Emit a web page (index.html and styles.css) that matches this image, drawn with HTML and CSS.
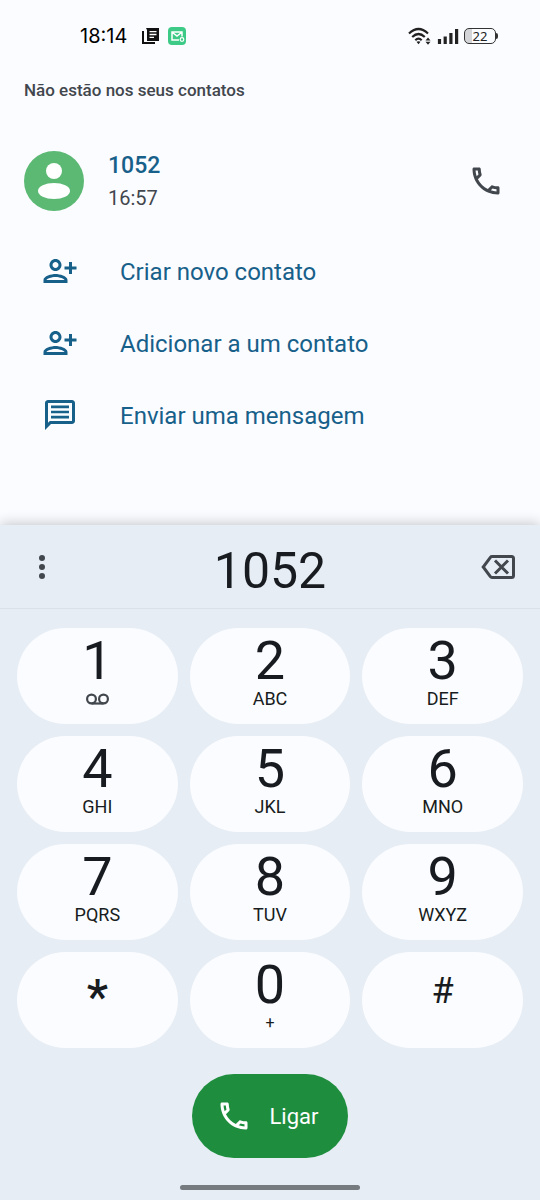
FILE: index.html
```
<!DOCTYPE html>
<html lang="pt-BR">
<head>
<meta charset="utf-8">
<meta name="viewport" content="width=device-width, initial-scale=1">
<title>Telefone</title>
<link rel="stylesheet" href="styles.css">
</head>
<body>
<svg class="defs" aria-hidden="true">
  <symbol id="call" viewBox="0 0 24 24"><path d="M6.54 5c.06.89.21 1.76.45 2.59l-1.2 1.2c-.41-1.2-.67-2.47-.76-3.79h1.51m9.86 12.02c.85.24 1.72.39 2.6.45v1.49c-1.32-.09-2.59-.35-3.8-.75l1.2-1.19M7.5 3H4c-.55 0-1 .45-1 1 0 9.39 7.61 17 17 17 .55 0 1-.45 1-1v-3.49c0-.55-.45-1-1-1-1.24 0-2.45-.2-3.57-.57-.1-.04-.21-.05-.31-.05-.26 0-.51.1-.71.29l-2.2 2.2c-2.83-1.45-5.15-3.76-6.59-6.59l2.2-2.2c.28-.28.36-.67.25-1.02C8.7 6.45 8.5 5.25 8.5 4c0-.55-.45-1-1-1z"/></symbol>
  <symbol id="person-add" viewBox="0 0 24 24"><path d="M13 8c0-2.21-1.79-4-4-4S5 5.79 5 8s1.79 4 4 4 4-1.79 4-4zm-2 0c0 1.1-.9 2-2 2s-2-.9-2-2 .9-2 2-2 2 .9 2 2zM1 18v2h16v-2c0-2.66-5.33-4-8-4s-8 1.34-8 4zm2 0c.2-.71 3.3-2 6-2 2.69 0 5.78 1.28 6 2H3zM20 14v-3h3V9h-3V6h-2v3h-3v2h3v3z"/></symbol>
  <symbol id="chat" viewBox="0 0 24 24"><path d="M4 2c-1.100 0-2 .9-2 2v18l4-4h14c1.100 0 2-.9 2-2V4c0-1.100-.9-2-2-2H4zm0 2h16v12H5.200L4 17.200V4zm2 1.700h12v1.800H6zm0 3.400h12v1.800H6zm0 3.400h12v1.800H6z"/></symbol>
</svg>

<header class="status">
  <div class="status-group">
    <time class="clock">18:14</time>
    <svg class="status-icon" viewBox="0 0 18 18" aria-hidden="true"><path d="M1 4v12h12" fill="none" stroke="#111" stroke-width="2"/><path d="M4 1h13v13H5V3z" fill="#111"/><path d="M7.500 4.700h7M7.500 7.500h7M7.500 10.300h4.500" stroke="#fff" stroke-width="1.300"/></svg>
    <svg class="status-icon" viewBox="0 0 18 18" aria-hidden="true"><rect width="18" height="18" rx="4" fill="#3dca86"/><path d="M11 13H4V5h10v4.500M4.500 5.500 9 9l4.500-3.500" fill="none" stroke="#fff" stroke-width="1.500"/><circle cx="14" cy="12.500" r="1.800" fill="#3dca86" stroke="#fff" stroke-width="1.200"/></svg>
  </div>
  <div class="status-group signals">
    <svg class="wifi" viewBox="0 0 24 18" aria-hidden="true"><g fill="none" stroke="#222" stroke-width="2.200"><path d="M1 6.500q9.500-9 19 0M4.200 10q6.300-6 12.600 0M7.300 13.200q3.200-3 6.400 0"/></g><path d="m10.500 17.200-2-2.400q2-1.300 4 0zM17.500 13.500l2.500-3 2.500 3zM17.500 14.800l2.500 3 2.500-3z" fill="#222"/></svg>
    <svg class="bars" viewBox="0 0 22 16" aria-hidden="true"><path d="M2.500 16v-5M8.200 16V8.500M13.900 16V5M19.600 16V1" stroke="#222" stroke-width="3.200"/></svg>
    <span class="battery" role="img" aria-label="Bateria 22%">22</span>
  </div>
</header>

<main class="results">
  <h1 class="heading">Não estão nos seus contatos</h1>
  <section class="contact">
    <svg class="avatar" viewBox="0 0 60 60" aria-hidden="true"><circle cx="30" cy="30" r="30" fill="#5bb974"/><circle cx="30" cy="20" r="8" fill="#fff"/><ellipse cx="30" cy="40" rx="16" ry="8" fill="#fff"/></svg>
    <div class="contact-text">
      <strong class="number">1052</strong>
      <time class="when">16:57</time>
    </div>
    <button class="icon-button" type="button" aria-label="Ligar para 1052"><svg class="icon"><use href="#call"/></svg></button>
  </section>
  <nav class="actions">
    <a class="action" href="#"><svg class="icon"><use href="#person-add"/></svg>Criar novo contato</a>
    <a class="action" href="#"><svg class="icon"><use href="#person-add"/></svg>Adicionar a um contato</a>
    <a class="action" href="#"><svg class="icon"><use href="#chat"/></svg>Enviar uma mensagem</a>
  </nav>
</main>

<section class="dialer">
  <div class="entry">
    <button class="icon-button" type="button" aria-label="Mais opções"><svg class="icon" viewBox="0 0 36 36"><circle cx="18" cy="9" r="3"/><circle cx="18" cy="18" r="3"/><circle cx="18" cy="27" r="3"/></svg></button>
    <input class="entry-number" type="tel" value="1052" aria-label="Número">
    <button class="icon-button" type="button" aria-label="Apagar"><svg class="icon" viewBox="0 0 36 36"><path d="M12 7.500h19.500q2 0 2 2v17q0 2-2 2H12q-1 0-1.600-.8L3.200 18l7.200-9.700q.6-.8 1.600-.8zM15 11.500l13 13M28 11.500l-13 13" fill="none" stroke="currentColor" stroke-width="3"/></svg></button>
  </div>
  <div class="keys">
    <button class="key" type="button"><span class="digit">1</span><span class="letters"><svg class="voicemail" viewBox="0 0 23 12" role="img" aria-label="Correio de voz"><path d="M5.500 10.500h12" stroke="currentColor" stroke-width="2.200"/><g fill="none" stroke="currentColor" stroke-width="2.200"><circle cx="5.500" cy="6" r="4.400"/><circle cx="17.500" cy="6" r="4.400"/></g></svg></span></button>
    <button class="key" type="button"><span class="digit">2</span><span class="letters">ABC</span></button>
    <button class="key" type="button"><span class="digit">3</span><span class="letters">DEF</span></button>
    <button class="key" type="button"><span class="digit">4</span><span class="letters">GHI</span></button>
    <button class="key" type="button"><span class="digit">5</span><span class="letters">JKL</span></button>
    <button class="key" type="button"><span class="digit">6</span><span class="letters">MNO</span></button>
    <button class="key" type="button"><span class="digit">7</span><span class="letters">PQRS</span></button>
    <button class="key" type="button"><span class="digit">8</span><span class="letters">TUV</span></button>
    <button class="key" type="button"><span class="digit">9</span><span class="letters">WXYZ</span></button>
    <button class="key symbol star" type="button">*</button>
    <button class="key" type="button"><span class="digit">0</span><span class="letters plus">+</span></button>
    <button class="key symbol" type="button">#</button>
  </div>
  <button class="call" type="button"><svg class="icon"><use href="#call"/></svg>Ligar</button>
  <div class="home-bar"></div>
</section>
</body>
</html>
```
FILE: styles.css
```
* { box-sizing: border-box; }

body {
  margin: 0;
  min-height: 100vh;
  display: flex;
  flex-direction: column;
  background: #fbfcff;
  color: #181c20;
  font-family: Roboto, "Liberation Sans", sans-serif;
}

button, input {
  border: 0;
  padding: 0;
  background: none;
  color: inherit;
  font: inherit;
}

.defs { display: none; }
.icon { width: 36px; height: 36px; flex: none; fill: currentColor; }

.status {
  height: 72px;
  padding: 0 42px 0 80px;
  display: flex;
  align-items: center;
  justify-content: space-between;
}
.status-group { display: flex; align-items: center; gap: 8px; }
.clock { margin-right: 7px; color: #000; font: 20px/24px Inter, sans-serif; }
.status-icon { width: 18px; height: 18px; }
.signals { gap: 5px; }
.wifi { width: 24px; height: 18px; }
.bars { width: 22px; height: 16px; }
.battery {
  position: relative;
  width: 32px;
  height: 16px;
  margin-right: 2px;
  border: 1px solid #333;
  border-radius: 5px;
  background: linear-gradient(90deg, #d3d4d8 22%, transparent 22%);
  color: #222;
  font: 13px/14px "Noto Sans", sans-serif;
  text-align: center;
}
.battery::after {
  content: "";
  position: absolute;
  top: 4px;
  right: -3px;
  width: 2px;
  height: 6px;
  border-radius: 0 2px 2px 0;
  background: #333;
}

.results { flex: 1; }
.heading {
  margin: 0;
  padding: 6px 24px;
  color: #42474e;
  font-size: 17px;
  line-height: 24px;
  font-weight: 500;
}
.contact {
  display: flex;
  align-items: center;
  gap: 24px;
  padding: 40px 36px 18px 24px;
}
.avatar { width: 60px; height: 60px; }
.contact-text {
  flex: 1;
  display: flex;
  flex-direction: column;
  padding-top: 2px;
}
.number { color: #17608a; font-size: 23px; line-height: 32px; font-weight: 500; }
.when { color: #42474e; font-size: 20px; line-height: 32px; }
.icon-button { display: flex; color: #42474e; }
.actions { display: flex; flex-direction: column; padding: 4px 42px; }
.action {
  height: 72px;
  display: flex;
  align-items: center;
  gap: 42px;
  color: #17608a;
  font-size: 24px;
  text-decoration: none;
}
.action .icon { margin-bottom: 2px; }

.dialer {
  display: flex;
  flex-direction: column;
  align-items: center;
  padding-bottom: 10px;
  background: #e6edf4;
  box-shadow: 0 -2px 12px rgba(0, 0, 0, 0.2);
}
.entry {
  width: 100%;
  height: 84px;
  padding: 0 24px;
  display: flex;
  align-items: center;
  border-bottom: 1px solid #dae1e8;
}
.entry-number {
  flex: 1;
  min-width: 0;
  padding-top: 8px;
  font-size: 50px;
  line-height: 60px;
  text-align: center;
}
.keys {
  width: 100%;
  padding: 19px 17px 26px;
  display: grid;
  grid-template-columns: repeat(3, 1fr);
  gap: 12px;
}
.key {
  height: 96px;
  padding-bottom: 7px;
  display: flex;
  flex-direction: column;
  align-items: center;
  justify-content: center;
  border-radius: 48px;
  background: #fbfcff;
}
.digit { font-size: 54px; line-height: 52px; }
.letters { height: 24px; font-size: 18px; line-height: 24px; }
.plus { font-size: 16px; }
.voicemail { display: block; width: 23px; height: 24px; color: #42474e; }
.symbol { font-size: 36px; padding-bottom: 18px; }
.star { font-size: 48px; font-weight: 500; padding-bottom: 8px; }
.call {
  height: 84px;
  padding: 0 30px 0 24px;
  display: flex;
  align-items: center;
  gap: 18px;
  border-radius: 42px;
  background: #1e8e3e;
  color: #fff;
  font-size: 22px;
}
.home-bar {
  width: 180px;
  max-width: 100%;
  height: 5px;
  margin-top: 27px;
  border-radius: 3px;
  background: #767b80;
}
```
